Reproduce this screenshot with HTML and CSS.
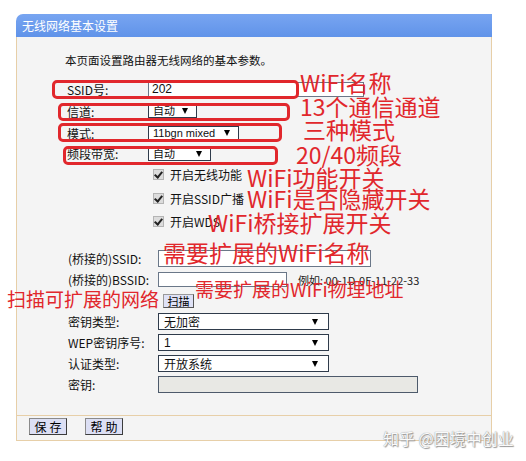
FILE: index.html
```html
<!DOCTYPE html>
<html lang="zh-CN">
<head>
    <meta charset="UTF-8">
    <meta name="viewport" content="width=device-width, initial-scale=1.0">
    <title>无线网络基本设置</title>
    <link rel="stylesheet" href="styles.css">
</head>
<body>
    <div class="page">
        <div class="panel">
            <div class="panel-head">无线网络基本设置</div>
            <div class="panel-body">
                <p class="intro">本页面设置路由器无线网络的基本参数。</p>

                <div class="basic">
                    <div class="row">
                        <span class="lbl">SSID号:</span>
                        <span class="field ssid">202</span>
                    </div>
                    <div class="row">
                        <span class="lbl">信道:</span>
                        <span class="select sel-channel">自动<i class="arrow"></i></span>
                    </div>
                    <div class="row">
                        <span class="lbl">模式:</span>
                        <span class="select sel-mode">11bgn mixed<i class="arrow"></i></span>
                    </div>
                    <div class="row row-short">
                        <span class="lbl">频段带宽:</span>
                        <span class="select sel-width">自动<i class="arrow"></i></span>
                    </div>
                </div>

                <div class="checks">
                    <div class="check"><i class="box"></i>开启无线功能</div>
                    <div class="check check-tall"><i class="box"></i>开启SSID广播</div>
                    <div class="check"><i class="box"></i>开启WDS</div>
                </div>

                <div class="bridge">
                    <div class="row">
                        <span class="lbl">(桥接的)SSID:</span>
                        <span class="field bridge-ssid"></span>
                    </div>
                    <div class="row">
                        <span class="lbl">(桥接的)BSSID:</span>
                        <span class="field bridge-bssid"></span>
                        <span class="hint">例如: 00-1D-0F-11-22-33</span>
                    </div>
                    <div class="row">
                        <span class="lbl"></span>
                        <button class="btn-scan">扫描</button>
                    </div>
                    <div class="row">
                        <span class="lbl">密钥类型:</span>
                        <span class="select sel-wide">无加密<i class="arrow"></i></span>
                    </div>
                    <div class="row">
                        <span class="lbl">WEP密钥序号:</span>
                        <span class="select sel-wide">1<i class="arrow"></i></span>
                    </div>
                    <div class="row">
                        <span class="lbl">认证类型:</span>
                        <span class="select sel-wide">开放系统<i class="arrow"></i></span>
                    </div>
                    <div class="row">
                        <span class="lbl">密钥:</span>
                        <span class="field key-off"></span>
                    </div>
                </div>
            </div>
            <div class="panel-foot">
                <button class="btn">保存</button>
                <button class="btn">帮助</button>
            </div>
        </div>

        <!-- hand-drawn notes on top of the form -->
        <div class="mark mark-ssid"></div>
        <div class="mark mark-channel"></div>
        <div class="mark mark-mode"></div>
        <div class="mark mark-width"></div>

        <div class="note note-ssid">WiFi名称</div>
        <div class="note note-channel">13个通信通道</div>
        <div class="note note-mode">三种模式</div>
        <div class="note note-width">20/40频段</div>
        <div class="note note-radio">WiFi功能开关</div>
        <div class="note note-hide">WiFi是否隐藏开关</div>
        <div class="note note-wds">WiFi桥接扩展开关</div>
        <div class="note note-bssid">需要扩展的WiFi名称</div>
        <div class="note note-small note-mac">需要扩展的WiFi物理地址</div>
        <div class="note note-small note-scan">扫描可扩展的网络</div>

        <div class="watermark">知乎 @困境中创业</div>
    </div>
</body>
</html>
```

FILE: styles.css
```css
body {
    margin: 0;
    background-color: #fff;
    font-family: "Noto Sans CJK SC", sans-serif;
    font-size: 12px;
    color: #111;
}

.page {
    position: relative;
    width: 526px;
    height: 461px;
    padding: 14px 0 0 16px;
    box-sizing: border-box;
    overflow: hidden;
}

.panel {
    width: 476px;
}

.panel-head {
    height: 23px;
    line-height: 23px;
    padding-left: 6px;
    color: #fff;
    background: linear-gradient(#78a5f1, #6093e9);
    border-radius: 7px 0 0 0;
}

.panel-body {
    height: 378px;
    box-sizing: border-box;
    padding-top: 15px;
    background-color: #f4f4f4;
    border-left: 1px solid #e7cfa8;
    border-right: 1px solid #e7cfa8;
}

.intro {
    margin: 0 0 10px 48px;
    height: 16px;
    line-height: 16px;
    font-size: 11.5px;
}

.row {
    display: flex;
    align-items: center;
}

.basic .row {
    height: 22px;
    padding-left: 50px;
}

.basic .row-short {
    height: 19px;
}

.basic .lbl {
    width: 81px;
}

.bridge {
    margin-top: 15px;
}

.bridge .row {
    height: 21px;
    padding-left: 51px;
}

.bridge .lbl {
    width: 90px;
}

.field {
    display: block;
    box-sizing: border-box;
    background-color: #fff;
    border: 1px solid #6a7788;
    font-family: "Liberation Sans", "Noto Sans CJK SC", sans-serif;
    padding-left: 3px;
}

.ssid {
    width: 216px;
    height: 15px;
    line-height: 13px;
}

.bridge-ssid {
    width: 213px;
    height: 17px;
}

.bridge-bssid {
    width: 129px;
    height: 15px;
}

.key-off {
    width: 260px;
    height: 17px;
    background-color: #e8e8e4;
    border-color: #4d5a6b;
}

.hint {
    margin-left: 11px;
    font-size: 11px;
    color: #222;
}

.select {
    display: flex;
    align-items: center;
    justify-content: space-between;
    box-sizing: border-box;
    padding: 0 8px 0 4px;
    background-color: #fff;
    border: 1px solid #2f3b4b;
    font-family: "Liberation Sans", "Noto Sans CJK SC", sans-serif;
}

.sel-channel,
.sel-mode,
.sel-width {
    height: 14px;
    font-size: 11px;
    line-height: 12px;
}

.sel-channel { width: 49px; }
.sel-mode { width: 91px; }
.sel-width { width: 63px; }

.sel-wide {
    width: 171px;
    height: 17px;
    padding-right: 10px;
    padding-left: 5px;
    border-width: 1.5px;
}

.arrow {
    width: 0;
    height: 0;
    border-left: 3.5px solid transparent;
    border-right: 3.5px solid transparent;
    border-top: 6px solid #000;
}

.checks .check {
    display: flex;
    align-items: center;
    height: 23px;
    padding-left: 136px;
}

.checks .check-tall {
    height: 24px;
}

.box {
    position: relative;
    width: 9px;
    height: 9px;
    margin-right: 6px;
    background-color: #dcdcdc;
    border: 1px solid #b4b4b4;
}

/* little tick inside the checkbox */
.box::after {
    content: "";
    position: absolute;
    left: 2px;
    top: 0;
    width: 3px;
    height: 6px;
    border-right: 2px solid #222;
    border-bottom: 2px solid #222;
    transform: rotate(40deg);
}

.btn-scan {
    margin-left: 5px;
    width: 31px;
    height: 14px;
    padding: 0;
    font-family: inherit;
    font-size: 11px;
    line-height: 12px;
    background-color: #dfe2f6;
    border: 1px solid #555;
    border-top-color: #999;
    border-left-color: #999;
}

.panel-foot {
    display: flex;
    gap: 18px;
    height: 26px;
    box-sizing: border-box;
    padding: 2px 0 0 12px;
    background-color: #f4f4f4;
    border: 1px solid #e7cfa8;
}

.btn {
    width: 38px;
    height: 17px;
    padding: 0 0 0 3px;
    font-family: inherit;
    font-size: 12px;
    line-height: 15px;
    letter-spacing: 3px;
    background-color: #dcdff4;
    border: 1px solid #3c3c3c;
    border-top-color: #8a8a8a;
    border-left-color: #8a8a8a;
}

.mark {
    position: absolute;
    box-sizing: border-box;
    border: 3px solid #e1272c;
    border-radius: 5px;
}

.mark-ssid { left: 52px; top: 80px; width: 247px; height: 19px; }
.mark-channel { left: 58px; top: 103px; width: 232px; height: 18px; }
.mark-mode { left: 58px; top: 123px; width: 224px; height: 19px; }
.mark-width { left: 63px; top: 146px; width: 215px; height: 19px; }

.note {
    position: absolute;
    color: #e1272c;
    font-size: 23px;
    line-height: 24px;
    white-space: nowrap;
}

.note-small {
    font-size: 19px;
    line-height: 20px;
}

.note-ssid { left: 300px; top: 70px; }
.note-channel { left: 300px; top: 94px; }
.note-mode { left: 303px; top: 117px; }
.note-width { left: 296px; top: 142px; }
.note-radio { left: 247px; top: 165px; }
.note-hide { left: 247px; top: 186px; }
.note-wds { left: 208px; top: 210px; }
.note-bssid { left: 163px; top: 240px; }
.note-mac { left: 195px; top: 279px; }
.note-scan { left: 7px; top: 289px; }

.watermark {
    position: absolute;
    left: 383px;
    top: 428px;
    font-size: 16px;
    line-height: 20px;
    color: #fafafa;
    text-shadow: 0 0 1px #777, 1px 1px 1px #999;
    white-space: nowrap;
}
```
